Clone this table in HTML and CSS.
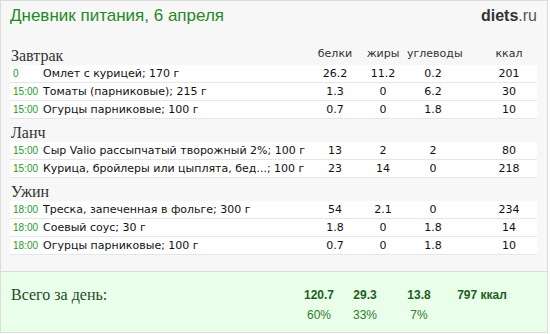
FILE: index.html
```html
<!DOCTYPE html>
<html lang="ru">
<head>
<meta charset="utf-8">
<title>Дневник питания</title>
<link rel="stylesheet" href="styles.css">
</head>
<body>
<div class="frame">
  <div class="header">
    <div class="title">Дневник питания, 6 апреля</div>
    <div class="logo"><b>diets</b>.ru</div>
  </div>

  <div class="sections">
    <div class="sec-head">
      <div class="sec-title">Завтрак</div>
      <div class="col-label">белки</div>
      <div class="col-label">жиры</div>
      <div class="col-label">углеводы</div>
      <div class="col-label kcal">ккал</div>
    </div>
    <div class="row"><span class="time">0</span><span class="name">Омлет с курицей; 170 г</span><span class="num">26.2</span><span class="num">11.2</span><span class="num">0.2</span><span class="num kcal">201</span></div>
    <div class="row"><span class="time">15:00</span><span class="name">Томаты (парниковые); 215 г</span><span class="num">1.3</span><span class="num">0</span><span class="num">6.2</span><span class="num kcal">30</span></div>
    <div class="row"><span class="time">15:00</span><span class="name">Огурцы парниковые; 100 г</span><span class="num">0.7</span><span class="num">0</span><span class="num">1.8</span><span class="num kcal">10</span></div>

    <div class="sec-head">
      <div class="sec-title">Ланч</div>
    </div>
    <div class="row"><span class="time">15:00</span><span class="name">Сыр Valio рассыпчатый творожный 2%; 100 г</span><span class="num">13</span><span class="num">2</span><span class="num">2</span><span class="num kcal">80</span></div>
    <div class="row"><span class="time">15:00</span><span class="name">Курица, бройлеры или цыплята, бед...; 100 г</span><span class="num">23</span><span class="num">14</span><span class="num">0</span><span class="num kcal">218</span></div>

    <div class="sec-head">
      <div class="sec-title">Ужин</div>
    </div>
    <div class="row"><span class="time">18:00</span><span class="name">Треска, запеченная в фольге; 300 г</span><span class="num">54</span><span class="num">2.1</span><span class="num">0</span><span class="num kcal">234</span></div>
    <div class="row"><span class="time">18:00</span><span class="name">Соевый соус; 30 г</span><span class="num">1.8</span><span class="num">0</span><span class="num">1.8</span><span class="num kcal">14</span></div>
    <div class="row"><span class="time">18:00</span><span class="name">Огурцы парниковые; 100 г</span><span class="num">0.7</span><span class="num">0</span><span class="num">1.8</span><span class="num kcal">10</span></div>
  </div>

  <div class="totals">
    <div class="tot-label">Всего за день:</div>
    <div class="tot-num">120.7</div>
    <div class="tot-num">29.3</div>
    <div class="tot-num c3">13.8</div>
    <div class="tot-num">797 ккал</div>
    <div class="tot-pct c1">60%</div>
    <div class="tot-pct">33%</div>
    <div class="tot-pct c3">7%</div>
  </div>
</div>
</body>
</html>
```

FILE: styles.css
```css
html, body {
  margin: 0;
  padding: 0;
  background: #ffffff;
}

.frame {
  width: 548px;
  height: 333px;
  box-sizing: border-box;
  border: 1px solid #dcdcdc;
  background: #f7f7f7;
  display: flex;
  flex-direction: column;
  overflow: hidden;
}

.header {
  height: 41px;
  box-sizing: border-box;
  padding: 5px 10px 0 9px;
  display: flex;
  justify-content: space-between;
  align-items: baseline;
}

.title {
  font-family: "Liberation Sans", Arial, sans-serif;
  font-size: 17px;
  line-height: 20px;
  color: #258a25;
}

.logo {
  font-family: "Liberation Sans", Arial, sans-serif;
  font-size: 16px;
  line-height: 20px;
  color: #555555;
}

.logo b {
  color: #333333;
  font-weight: bold;
}

.sections {
  padding: 0 10px 0 9px;
}

.sec-head,
.row {
  display: grid;
  grid-template-columns: 33px 1fr 48px 48px 52px 78px;
}

.sec-head {
  height: 23px;
  align-items: end;
}

.sec-title {
  grid-column: 1 / 3;
  font-family: "Liberation Serif", "Times New Roman", serif;
  font-size: 16px;
  line-height: 18px;
  color: #333333;
  padding-left: 1px;
}

.col-label {
  font-family: "DejaVu Sans", Verdana, sans-serif;
  font-size: 11px;
  line-height: 13px;
  color: #333333;
  text-align: center;
  padding-bottom: 5px;
}

.kcal {
  padding-left: 22px;
}

.row {
  height: 18px;
  box-sizing: border-box;
  background: #ffffff;
  border-bottom: 1px solid #e6e6e6;
  align-items: center;
  font-family: "DejaVu Sans", Verdana, sans-serif;
  font-size: 11px;
  line-height: 17px;
  color: #111111;
}

.time {
  font-family: "Liberation Sans", Arial, sans-serif;
  font-size: 10px;
  color: #1f9a1f;
  padding-left: 3px;
}

.name {
  white-space: nowrap;
  overflow: hidden;
}

.num {
  text-align: center;
}

.totals {
  margin-top: auto;
  height: 61px;
  box-sizing: border-box;
  border-top: 1px solid #dcdcdc;
  background: #eaffea;
  padding: 15px 25px 0 9px;
  display: grid;
  grid-template-columns: 1fr 46px 46px 54px 80px;
  grid-template-rows: 16px 16px;
  row-gap: 4px;
  align-content: start;
}

.tot-label {
  font-family: "Liberation Serif", "Times New Roman", serif;
  font-size: 16px;
  line-height: 16px;
  color: #1c4c1c;
  padding-left: 1px;
}

.tot-num {
  font-family: "Liberation Sans", Arial, sans-serif;
  font-size: 12px;
  font-weight: bold;
  line-height: 16px;
  color: #1d5e1d;
  text-align: center;
}

.tot-pct {
  font-family: "Liberation Sans", Arial, sans-serif;
  font-size: 12px;
  line-height: 16px;
  color: #2f7a2f;
  text-align: center;
}

.c1 {
  grid-column: 2;
}

.c3 {
  padding-left: 8px;
}
```
